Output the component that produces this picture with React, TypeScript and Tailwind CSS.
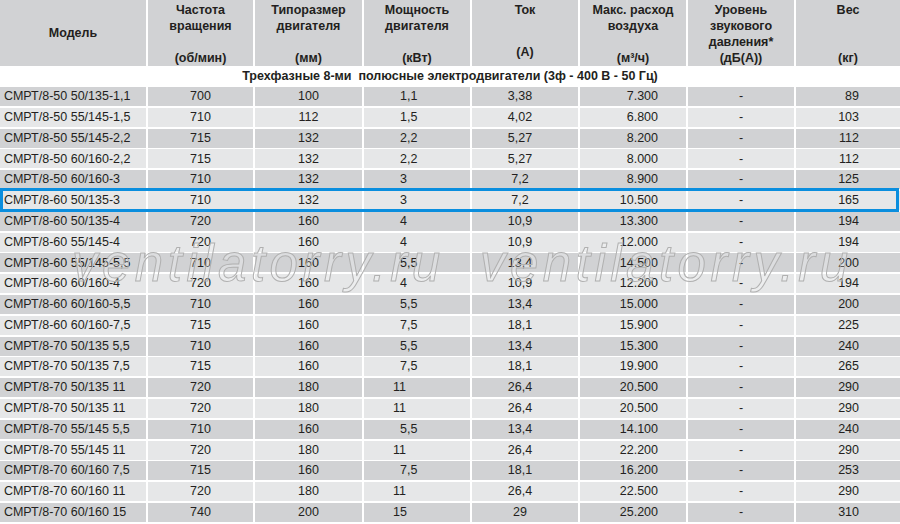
import type { ReactNode } from 'react'

type Row = {
  model: string
  rpm: string
  frame: string
  power: string
  amps: string
  air: string
  noise: string
  weight: string
}

const rows: Row[] = [
  { model: 'СМРТ/8-50 50/135-1,1', rpm: '700', frame: '100', power: '1,1', amps: '3,38', air: '7.300', noise: '-', weight: '89' },
  { model: 'СМРТ/8-50 55/145-1,5', rpm: '710', frame: '112', power: '1,5', amps: '4,02', air: '6.800', noise: '-', weight: '103' },
  { model: 'СМРТ/8-50 55/145-2,2', rpm: '715', frame: '132', power: '2,2', amps: '5,27', air: '8.200', noise: '-', weight: '112' },
  { model: 'СМРТ/8-50 60/160-2,2', rpm: '715', frame: '132', power: '2,2', amps: '5,27', air: '8.000', noise: '-', weight: '112' },
  { model: 'СМРТ/8-50 60/160-3', rpm: '710', frame: '132', power: '3', amps: '7,2', air: '8.900', noise: '-', weight: '125' },
  { model: 'СМРТ/8-60 50/135-3', rpm: '710', frame: '132', power: '3', amps: '7,2', air: '10.500', noise: '-', weight: '165' },
  { model: 'СМРТ/8-60 50/135-4', rpm: '720', frame: '160', power: '4', amps: '10,9', air: '13.300', noise: '-', weight: '194' },
  { model: 'СМРТ/8-60 55/145-4', rpm: '720', frame: '160', power: '4', amps: '10,9', air: '12.000', noise: '-', weight: '194' },
  { model: 'СМРТ/8-60 55/145-5,5', rpm: '710', frame: '160', power: '5,5', amps: '13,4', air: '14.500', noise: '-', weight: '200' },
  { model: 'СМРТ/8-60 60/160-4', rpm: '720', frame: '160', power: '4', amps: '10,9', air: '12.200', noise: '-', weight: '194' },
  { model: 'СМРТ/8-60 60/160-5,5', rpm: '710', frame: '160', power: '5,5', amps: '13,4', air: '15.000', noise: '-', weight: '200' },
  { model: 'СМРТ/8-60 60/160-7,5', rpm: '715', frame: '160', power: '7,5', amps: '18,1', air: '15.900', noise: '-', weight: '225' },
  { model: 'СМРТ/8-70 50/135 5,5', rpm: '710', frame: '160', power: '5,5', amps: '13,4', air: '15.300', noise: '-', weight: '240' },
  { model: 'СМРТ/8-70 50/135 7,5', rpm: '715', frame: '160', power: '7,5', amps: '18,1', air: '19.900', noise: '-', weight: '265' },
  { model: 'СМРТ/8-70 50/135 11', rpm: '720', frame: '180', power: '11', amps: '26,4', air: '20.500', noise: '-', weight: '290' },
  { model: 'СМРТ/8-70 50/135 11', rpm: '720', frame: '180', power: '11', amps: '26,4', air: '20.500', noise: '-', weight: '290' },
  { model: 'СМРТ/8-70 55/145 5,5', rpm: '710', frame: '160', power: '5,5', amps: '13,4', air: '14.100', noise: '-', weight: '240' },
  { model: 'СМРТ/8-70 55/145 11', rpm: '720', frame: '180', power: '11', amps: '26,4', air: '22.200', noise: '-', weight: '290' },
  { model: 'СМРТ/8-70 60/160 7,5', rpm: '715', frame: '160', power: '7,5', amps: '18,1', air: '16.200', noise: '-', weight: '253' },
  { model: 'СМРТ/8-70 60/160 11', rpm: '720', frame: '180', power: '11', amps: '26,4', air: '22.500', noise: '-', weight: '290' },
  { model: 'СМРТ/8-70 60/160 15', rpm: '740', frame: '200', power: '15', amps: '29', air: '25.200', noise: '-', weight: '310' },
]

const HIGHLIGHT = 5
const cols = 'grid grid-cols-[146px_105px_107px_106px_106px_106px_106px_1fr] gap-x-[2px]'

function HeadCell({ title, unit, unitClass = '' }: { title: ReactNode; unit: string; unitClass?: string }) {
  return (
    <div className="flex h-full flex-col justify-between bg-[#d1d2d4] pt-[2px] text-center leading-[16px]">
      <div>{title}</div>
      <div className={unitClass}>{unit}</div>
    </div>
  )
}

// outlined site watermark drawn over the table
function Watermark({ className }: { className: string }) {
  return (
    <div
      className={`pointer-events-none absolute z-20 select-none whitespace-nowrap text-[51px] font-light italic leading-none tracking-[4.5px] text-[rgba(255,255,255,0.25)] [-webkit-text-stroke:1px_#b0b0b0] ${className}`}
    >
      ventilatorry.ru
    </div>
  )
}

export default function App() {
  return (
    <div className="relative h-[524px] w-[900px] overflow-hidden bg-white font-['Liberation_Sans',Arial,sans-serif] text-[12.5px] text-[#231f20]">
      <div className={`${cols} h-[64px] font-bold`}>
        <div className="flex items-center justify-center bg-[#d1d2d4]">Модель</div>
        <HeadCell title={<>Частота<br />вращения</>} unit="(об/мин)" />
        <HeadCell title={<>Типоразмер<br />двигателя</>} unit="(мм)" />
        <HeadCell title={<>Мощность<br />двигателя</>} unit="(кВт)" />
        <HeadCell title="Ток" unit="(А)" unitClass="pb-[6px]" />
        <HeadCell title={<>Макс. расход<br />воздуха</>} unit="(м³/ч)" />
        <HeadCell title={<>Уровень<br />звукового<br />давления*</>} unit="(дБ(А))" />
        <HeadCell title="Вес" unit="(кг)" />
      </div>

      <div className="mt-[2px] flex h-[20px] items-center justify-center whitespace-pre font-bold">
        Трехфазные 8-ми  полюсные электродвигатели (3ф - 400 В - 50 Гц)
      </div>

      <div className="mt-[1px] flex flex-col gap-y-[1.8px]">
        {rows.map((r, i) => {
          const bg = i % 2 === 0 ? 'bg-[#d1d2d4]' : 'bg-[#e6e7e8]'
          const cell = `${bg} flex h-[19px] items-center`
          return (
            <div key={i} className={`${cols} relative`}>
              <div className={`${cell} pl-[4px]`}>{r.model}</div>
              <div className={`${cell} justify-center`}>{r.rpm}</div>
              <div className={`${cell} justify-center`}>{r.frame}</div>
              <div className={`${cell} ${r.power.length === 2 ? 'pl-[29px]' : 'pl-[36px]'}`}>{r.power}</div>
              <div className={`${cell} justify-center pr-[10px]`}>{r.amps}</div>
              <div className={`${cell} justify-end pr-[28px]`}>{r.air}</div>
              <div className={`${cell} justify-center`}>{r.noise}</div>
              <div className={`${cell} justify-end pr-[41px]`}>{r.weight}</div>
              {i === HIGHLIGHT ? (
                <div className="pointer-events-none absolute -top-[3px] -bottom-[2px] left-0 right-[1px] z-10 border-[3px] border-[#0a8ede]" />
              ) : null}
            </div>
          )
        })}
      </div>

      <Watermark className="left-[72px] top-[238px]" />
      <Watermark className="left-[480px] top-[238px]" />
    </div>
  )
}
